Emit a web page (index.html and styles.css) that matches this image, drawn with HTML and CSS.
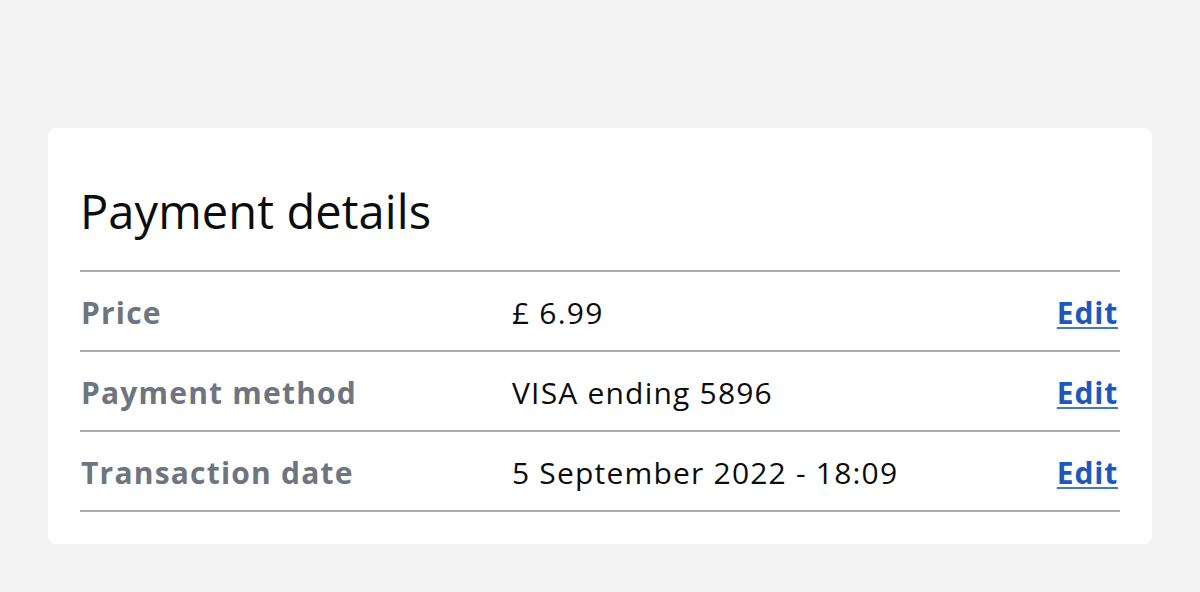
FILE: index.html
```html
<!DOCTYPE html>
<html lang="en">
<head>
<meta charset="utf-8">
<title>Payment details</title>
<link rel="stylesheet" href="styles.css">
</head>
<body>
<main class="page">
  <section class="card">
    <h1 class="title">Payment details</h1>
    <dl class="list">
      <div class="row">
        <dt class="label">Price</dt>
        <dd class="value">£ 6.99</dd>
        <dd class="action"><a href="#" class="edit">Edit</a></dd>
      </div>
      <div class="row">
        <dt class="label">Payment method</dt>
        <dd class="value">VISA ending 5896</dd>
        <dd class="action"><a href="#" class="edit">Edit</a></dd>
      </div>
      <div class="row">
        <dt class="label">Transaction date</dt>
        <dd class="value">5 September 2022 - 18:09</dd>
        <dd class="action"><a href="#" class="edit">Edit</a></dd>
      </div>
    </dl>
  </section>
</main>
</body>
</html>
```

FILE: styles.css
```css
html, body {
  margin: 0;
  padding: 0;
  background: #f3f3f3;
  font-family: "Open Sans", "Noto Sans", sans-serif;
  color: #0b0c0c;
}

.page {
  padding: 128px 48px 48px;
}

.card {
  background: #ffffff;
  border-radius: 8px;
  padding: 32px 32px 32px;
}

.title {
  margin: 0;
  font-size: 47px;
  font-weight: 400;
  line-height: 102px;
  height: 110px;
  letter-spacing: 0.1px;
}

.list {
  margin: 0;
  border-top: 2px solid #a9abae;
}

.row {
  display: grid;
  grid-template-columns: 432px 1fr auto;
  align-items: center;
  box-sizing: border-box;
  height: 80px;
  padding-top: 3px;
  border-bottom: 2px solid #a9abae;
}

.label, .value, .action {
  margin: 0;
  font-size: 30px;
  line-height: 40px;
}

.label {
  font-weight: 700;
  color: #6f7580;
  padding-left: 1px;
  letter-spacing: 1.2px;
}

.value {
  font-weight: 400;
  color: #0b0c0c;
  letter-spacing: 1.2px;
}

.action {
  text-align: right;
}

.edit {
  font-weight: 700;
  color: #1d59bb;
  letter-spacing: 0.8px;
  text-decoration: underline;
  text-decoration-color: #3d78d6;
  text-decoration-thickness: 2px;
  text-underline-offset: 3px;
  margin-right: 2px;
}
```
